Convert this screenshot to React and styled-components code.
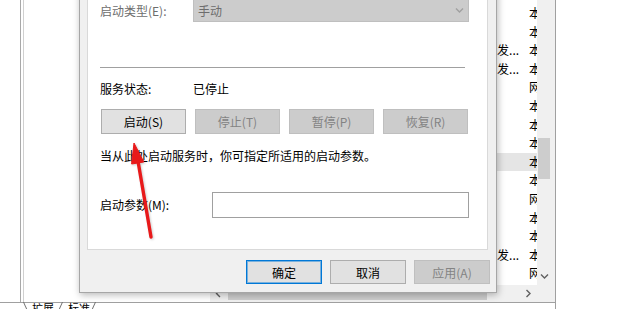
import React from 'react';
import styled, { createGlobalStyle } from 'styled-components';

const GlobalStyle = createGlobalStyle`
  html, body {
    margin: 0;
    padding: 0;
    background: #fff;
  }
  body {
    font-family: "Noto Sans CJK SC", "Noto Sans", sans-serif;
    font-size: 12px;
    color: #000;
  }
  * { box-sizing: border-box; }
`

const Screen = styled.div`
  position: relative;
  width: 620px;
  height: 309px;
  overflow: hidden;
  background: #fff;
`

/* ---------- services console behind the dialog ---------- */

const ConsoleWindow = styled.div`
  display: flex;
  flex-direction: column;
  width: 556px;
  height: 309px;
  border-right: 1px solid #a0a0a0;
`
const ConsoleBody = styled.div`
  display: flex;
  height: 303px;
  border-bottom: 1px solid #a0a0a0;
`
const Gutter = styled.div`
  width: 21px;
  border-right: 1px solid #a9a9a9;
  margin-right: 2px;
`
const DescPane = styled.div`
  width: 187px;
  border-left: 1px solid #d0d0d0;
`
const ListPane = styled.div`
  display: grid;
  grid-template-columns: 327px 14px;
  grid-template-rows: 285px 17px;
`
const RowList = styled.div`
  overflow: hidden;
  padding-top: 4px;
`
const Row = styled.div`
  display: flex;
  height: 18.6px;
  line-height: 18.6px;
  white-space: nowrap;
  background: ${p => (p.$selected ? '#e5e5e5' : 'transparent')};
`
const Cell = styled.div`
  flex: none;
  width: ${p => p.$w}px;
  padding-left: ${p => p.$pad || 0}px;
  overflow: hidden;
`
const VScroll = styled.div`
  display: flex;
  flex-direction: column;
  background: #f0f0f0;
  padding-top: 138px;
`
const VThumb = styled.div`
  height: 41px;
  margin: 0 1px;
  background: #cdcdcd;
`
const Spacer = styled.div`
  flex: 1;
`
const ArrowBtn = styled.div`
  flex: none;
  width: ${p => p.$w || 17}px;
  height: 17px;
  display: flex;
  align-items: center;
  justify-content: center;
  color: #606060;
`
const HScroll = styled.div`
  display: flex;
  align-items: center;
  background: #f0f0f0;
`
const HThumb = styled.div`
  width: 259px;
  height: 13px;
  margin-left: 1px;
  background: #cdcdcd;
`
const Corner = styled.div`
  background: #f0f0f0;
`
const FrameBand = styled.div`
  width: 4px;
  background: #f0f0f0;
`
const TabStrip = styled.div`
  display: flex;
  padding-left: 23px;
  height: 6px;
  line-height: 12px;
  font-size: 11px;
`
const Tab = styled.div`
  position: relative;
  padding: ${p => (p.$first ? '0 9px 0 9px' : '0 6px 0 5px')};
  margin-top: -1px;
  &::before {
    content: '';
    display: ${p => (p.$first ? 'block' : 'none')};
    position: absolute;
    left: 0;
    top: 0;
    width: 1px;
    height: 14px;
    background: #707070;
    transform: skewX(24deg);
    transform-origin: top left;
  }
  &::after {
    content: '';
    position: absolute;
    right: 0;
    top: 0;
    width: 1px;
    height: 14px;
    background: #707070;
    transform: skewX(-24deg);
    transform-origin: top left;
  }
`

/* ---------- properties dialog ---------- */

const Dialog = styled.div`
  position: absolute;
  left: 79px;
  top: -12px;
  width: 418px;
  background: #f0f0f0;
  border: 1px solid #a6a6a6;
  box-shadow: 1px 2px 7px rgba(0, 0, 0, 0.28);
  display: flex;
  flex-direction: column;
`
const Panel = styled.div`
  margin: 0 8px 0 7px;
  height: 261px;
  background: #fff;
  border: 1px solid #d9d9d9;
  padding: 9px 0 0 12px;
  display: flex;
  flex-direction: column;
`
const FieldRow = styled.div`
  display: flex;
  align-items: center;
  line-height: 16px;
  margin-top: ${p => p.$mt || 0}px;
`
const Label = styled.div`
  flex: none;
  width: ${p => p.$w}px;
  color: ${p => (p.$disabled ? '#6d6d6d' : '#000')};
`
const Combo = styled.div`
  width: 276px;
  height: 23px;
  display: flex;
  align-items: center;
  justify-content: space-between;
  padding: 0 4px 0 4px;
  background: #cccccc;
  border: 1px solid #bfbfbf;
  color: #6d6d6d;
`
const ComboArrow = styled.span`
  display: flex;
  color: #a0a0a0;
`
const Separator = styled.div`
  width: 365px;
  height: 1px;
  margin-top: 45px;
  background: #a0a0a0;
`
const ButtonGrid = styled.div`
  display: grid;
  grid-template-columns: repeat(4, 85px);
  column-gap: 9px;
  margin: 12px 0 0 1px;
`
const Button = styled.div`
  height: ${p => p.$h || 25}px;
  width: ${p => (p.$w ? `${p.$w}px` : 'auto')};
  display: flex;
  align-items: center;
  justify-content: center;
  background: ${p => (p.$disabled ? '#cccccc' : '#e1e1e1')};
  border: 1px solid ${p => (p.$default ? '#0078d7' : p.$disabled ? '#bfbfbf' : '#adadad')};
  box-shadow: ${p => (p.$default ? 'inset 0 0 0 1px rgba(0,120,215,0.45)' : 'none')};
  color: ${p => (p.$disabled ? '#838383' : '#000')};
`
const Hint = styled.div`
  margin-top: 14px;
  line-height: 16px;
`
const TextBox = styled.div`
  width: 257px;
  height: 26px;
  background: #fff;
  border: 1px solid #a0a0a0;
`
const Footer = styled.div`
  display: flex;
  justify-content: flex-end;
  gap: 8px;
  padding: 10px 6px 8px 0;
`

/* ---------- red annotation arrow ---------- */

const Overlay = styled.svg`
  position: absolute;
  left: 0;
  top: 0;
  pointer-events: none;
  filter: drop-shadow(1px 1px 1px rgba(0, 0, 0, 0.2));
`

const rows = [
  ['手动', '本'],
  ['手动', '本'],
  ['手动(触发...', '本'],
  ['手动(触发...', '本'],
  ['手动', '网'],
  ['自动', '本'],
  ['手动', '本'],
  ['手动', '本'],
  ['手动', '本'],
  ['自动', '本'],
  ['手动', '网'],
  ['手动', '本'],
  ['自动', '本'],
  ['手动(触发...', '本'],
  ['手动', '网'],
]

const Chevron = ({ dir }) => {
  const d = {
    down: 'M1 1.5 L4.5 5 L8 1.5',
    right: 'M2.5 1 L6 4.5 L2.5 8',
    left: 'M6 1 L2.5 4.5 L6 8',
  }[dir]
  const h = dir === 'down' ? 7 : 9
  return (
    <svg width="9" height={h} viewBox={`0 0 9 ${h}`}>
      <path d={d} fill="none" stroke="currentColor" strokeWidth="1.4" />
    </svg>
  )
}

function ServicesConsole() {
  return (
    <ConsoleWindow>
      <ConsoleBody>
        <Gutter />
        <DescPane />
        <ListPane>
          <RowList>
            {rows.map(([start, logon], i) => (
              <Row key={i} $selected={i === 8}>
                <Cell $w={242} />
                <Cell $w={72} $pad={5}>{start}</Cell>
                <Cell $w={20} $pad={5}>{logon}</Cell>
              </Row>
            ))}
          </RowList>
          <VScroll>
            <VThumb />
            <Spacer />
            <ArrowBtn $w={14}><Chevron dir="down" /></ArrowBtn>
          </VScroll>
          <HScroll>
            <ArrowBtn><Chevron dir="left" /></ArrowBtn>
            <HThumb />
            <Spacer />
            <ArrowBtn><Chevron dir="right" /></ArrowBtn>
          </HScroll>
          <Corner />
        </ListPane>
        <FrameBand />
      </ConsoleBody>
      <TabStrip>
        <Tab $first>扩展</Tab>
        <Tab>标准</Tab>
      </TabStrip>
    </ConsoleWindow>
  )
}

function PropertiesDialog() {
  return (
    <Dialog>
      <Panel>
        <FieldRow>
          <Label $w={93} $disabled>启动类型(E):</Label>
          <Combo>
            <span>手动</span>
            <ComboArrow><Chevron dir="down" /></ComboArrow>
          </Combo>
        </FieldRow>
        <Separator />
        <FieldRow $mt={13}>
          <Label $w={93}>服务状态:</Label>
          <span>已停止</span>
        </FieldRow>
        <ButtonGrid>
          <Button>启动(S)</Button>
          <Button $disabled>停止(T)</Button>
          <Button $disabled>暂停(P)</Button>
          <Button $disabled>恢复(R)</Button>
        </ButtonGrid>
        <Hint>当从此处启动服务时，你可指定所适用的启动参数。</Hint>
        <FieldRow $mt={28}>
          <Label $w={112}>启动参数(M):</Label>
          <TextBox />
        </FieldRow>
      </Panel>
      <Footer>
        <Button $w={76} $h={24} $default>确定</Button>
        <Button $w={76} $h={24}>取消</Button>
        <Button $w={76} $h={24} $disabled>应用(A)</Button>
      </Footer>
    </Dialog>
  )
}

export default function App() {
  return (
    <Screen>
      <GlobalStyle />
      <ServicesConsole />
      <PropertiesDialog />
      <Overlay width="620" height="309" viewBox="0 0 620 309">
        <line x1="151" y1="237" x2="137.8" y2="160" stroke="#e8191a" strokeWidth="3.4" strokeLinecap="round" />
        <polygon points="134,143 143.8,162 131.6,164" fill="#e8191a" stroke="#e8191a" strokeWidth="1" strokeLinejoin="round" />
      </Overlay>
    </Screen>
  )
}
